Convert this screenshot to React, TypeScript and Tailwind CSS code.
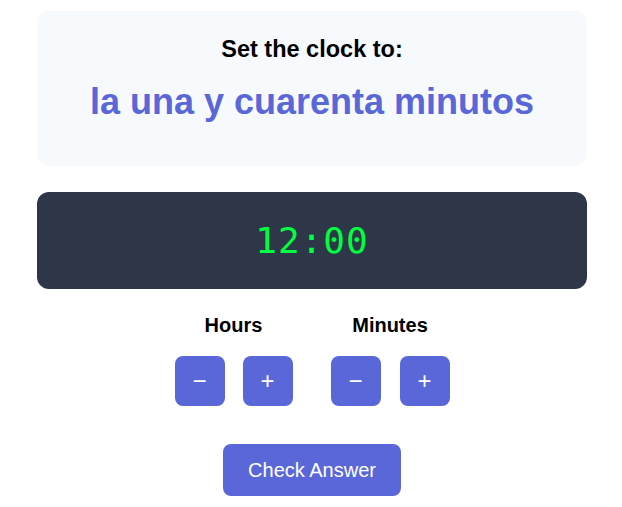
export default function App() {
  const btn =
    "w-[50px] h-[50px] rounded-lg bg-[#5a67d8] text-white text-[24px] flex items-center justify-center";

  return (
    <div className="w-full min-h-screen bg-white font-['Liberation_Sans',Arial,sans-serif] text-black flex justify-center pl-[2px]">
      <div className="w-[550px] pt-[11px] flex flex-col items-center">
        {/* Prompt */}
        <div className="w-full h-[155px] rounded-xl bg-[#f7fafc] flex flex-col items-center pt-[22px]">
          <p className="text-[23.5px] font-bold leading-[32px]">Set the clock to:</p>
          <p className="mt-[15px] text-[36px] font-bold leading-[44px] text-[#5a67d8]">
            la una y cuarenta minutos
          </p>
        </div>

        {/* Digital display */}
        <div className="w-full h-[97px] mt-[26px] rounded-xl bg-[#2d3748] flex items-center justify-center">
          <span className="font-['DejaVu_Sans_Mono',monospace] text-[36px] text-[#00ff41] tracking-[1px]">
            12:00
          </span>
        </div>

        {/* Controls */}
        <div className="flex gap-[38px] mt-[24px]">
          <div className="flex flex-col items-center">
            <p className="text-xl font-bold leading-[24px]">Hours</p>
            <div className="flex gap-[18px] mt-[19px]">
              <button className={btn}>−</button>
              <button className={btn}>+</button>
            </div>
          </div>
          <div className="flex flex-col items-center">
            <p className="text-xl font-bold leading-[24px]">Minutes</p>
            <div className="flex gap-[19px] mt-[19px]">
              <button className={btn}>−</button>
              <button className={btn}>+</button>
            </div>
          </div>
        </div>

        <button className="mt-[38px] w-[178px] h-[52px] rounded-lg bg-[#5a67d8] text-white text-xl">
          Check Answer
        </button>
      </div>
    </div>
  );
}
